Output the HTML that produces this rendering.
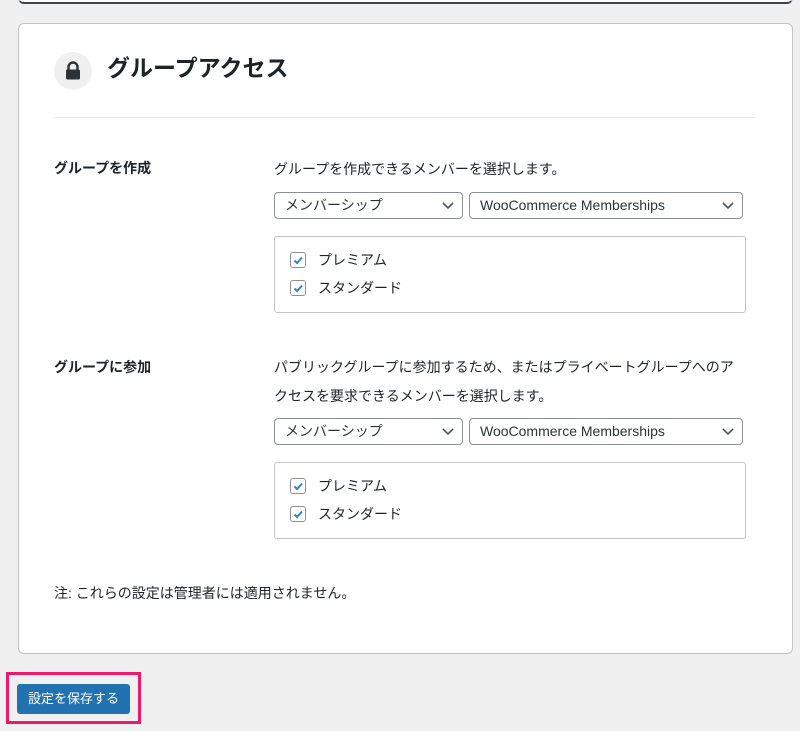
<!DOCTYPE html>
<html><head><meta charset="utf-8"><style>
body{margin:0;width:800px;height:731px;background:#f0f0f1;font-family:"Liberation Sans","Noto Sans CJK JP",sans-serif;color:#1d2327;position:relative;overflow:hidden;font-size:14px}
.a{position:absolute}
.card{left:18px;top:23px;width:773px;height:629px;background:#fff;border:1px solid #c3c4c7;border-radius:6px}
.prev{left:18px;top:-10px;width:773px;height:11px;background:#fff;border:1px solid #c3c4c7;border-bottom:2px solid #3c434a;border-radius:0 0 6px 6px}
.sel{height:27px;border:1px solid #8c8f94;border-radius:4px;background:#fff;box-sizing:border-box;font-size:14px;line-height:25px;padding-left:10px;color:#2c3338}
.sel svg{position:absolute;right:8px;top:8px}
.box{border:1px solid #c3c4c7;border-radius:3px;box-sizing:border-box;background:#fff}
.cb{width:16px;height:16px;border:1px solid #8c8f94;border-radius:3px;box-sizing:border-box}
.cb svg{position:absolute;left:0;top:0}
</style></head><body>
<div class="a prev"></div>
<div class="a card"></div>
<div class="a" style="left:54px;top:52px;width:38px;height:38px;border-radius:50%;background:#f0f0f1"></div>
<svg class="a" style="left:64px;top:61px" width="18" height="20" viewBox="0 0 18 20"><path d="M4.5 9V6a4.5 4.5 0 0 1 9 0v3" fill="none" stroke="#2c3338" stroke-width="2.4"/><rect x="2" y="8.5" width="14" height="10" rx="1.5" fill="#2c3338"/></svg>
<div class="a" style="left:107px;top:53px;font-size:23px;font-weight:bold;line-height:30px">グループアクセス</div>
<div class="a" style="left:54px;top:117px;width:701px;height:1px;background:#e4e4e7"></div>

<div class="a" style="left:54px;top:158px;font-weight:bold;font-size:14px;line-height:20px">グループを作成</div>
<div class="a" style="left:274px;top:158px;line-height:22px">グループを作成できるメンバーを選択します。</div>
<div class="a sel" style="left:274px;top:192px;width:189px">メンバーシップ<svg width="12" height="10"><path d="M1 2l5 5 5-5" fill="none" stroke="#50575e" stroke-width="1.6"/></svg></div>
<div class="a sel" style="left:469px;top:192px;width:274px">WooCommerce Memberships<svg width="12" height="10"><path d="M1 2l5 5 5-5" fill="none" stroke="#50575e" stroke-width="1.6"/></svg></div>
<div class="a box" style="left:274px;top:236px;width:472px;height:77px"></div>
<div class="a cb" style="left:290px;top:252px"><svg width="16" height="16"><path d="M3.5 7.5l2.5 2.5 5-5.5" fill="none" stroke="#3582c4" stroke-width="2"/></svg></div>
<div class="a" style="left:318px;top:250px;line-height:20px">プレミアム</div>
<div class="a cb" style="left:290px;top:280px"><svg width="16" height="16"><path d="M3.5 7.5l2.5 2.5 5-5.5" fill="none" stroke="#3582c4" stroke-width="2"/></svg></div>
<div class="a" style="left:318px;top:278px;line-height:20px">スタンダード</div>

<div class="a" style="left:54px;top:357px;font-weight:bold;line-height:20px">グループに参加</div>
<div class="a" style="left:274px;top:353px;width:470px;line-height:29px">パブリックグループに参加するため、またはプライベートグループへのアクセスを要求できるメンバーを選択します。</div>
<div class="a sel" style="left:274px;top:418px;width:189px">メンバーシップ<svg width="12" height="10"><path d="M1 2l5 5 5-5" fill="none" stroke="#50575e" stroke-width="1.6"/></svg></div>
<div class="a sel" style="left:469px;top:418px;width:274px">WooCommerce Memberships<svg width="12" height="10"><path d="M1 2l5 5 5-5" fill="none" stroke="#50575e" stroke-width="1.6"/></svg></div>
<div class="a box" style="left:274px;top:462px;width:472px;height:77px"></div>
<div class="a cb" style="left:290px;top:478px"><svg width="16" height="16"><path d="M3.5 7.5l2.5 2.5 5-5.5" fill="none" stroke="#3582c4" stroke-width="2"/></svg></div>
<div class="a" style="left:318px;top:476px;line-height:20px">プレミアム</div>
<div class="a cb" style="left:290px;top:506px"><svg width="16" height="16"><path d="M3.5 7.5l2.5 2.5 5-5.5" fill="none" stroke="#3582c4" stroke-width="2"/></svg></div>
<div class="a" style="left:318px;top:504px;line-height:20px">スタンダード</div>

<div class="a" style="left:54px;top:583px;line-height:20px">注: これらの設定は管理者には適用されません。</div>

<div class="a" style="left:6px;top:672px;width:129px;height:46px;border:3px solid #f0186a"></div>
<div class="a" style="left:17px;top:684px;width:113px;height:30px;background:#2271b1;border-radius:3px;color:#fff;font-size:13px;line-height:30px;text-align:center">設定を保存する</div>
</body></html>
